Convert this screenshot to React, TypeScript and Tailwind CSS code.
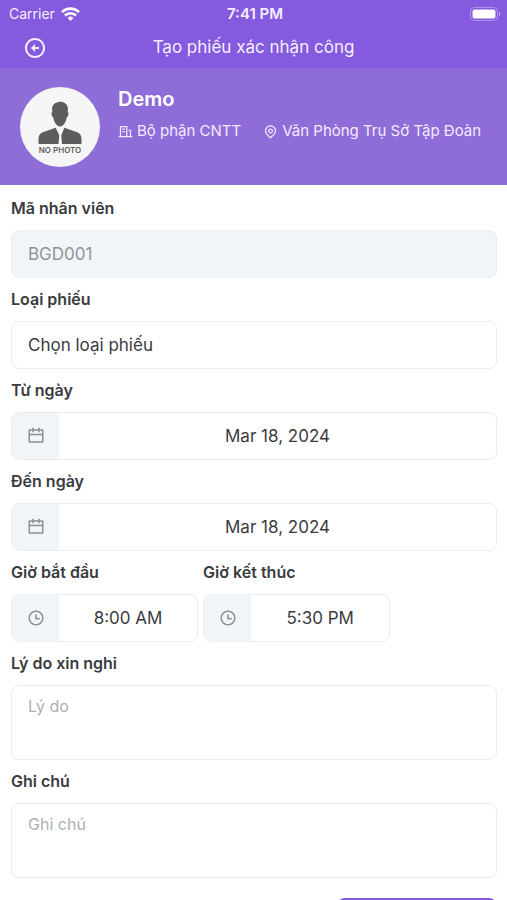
import { ReactNode } from "react";
import {
  RiArrowLeftCircleLine,
  RiBuildingLine,
  RiCalendarLine,
  RiMapPinLine,
  RiTimeLine,
} from "react-icons/ri";

interface FieldProps {
  id: string;
  label: string;
  className?: string;
  children: ReactNode;
}

function Field({ id, label, className = "", children }: FieldProps) {
  return (
    <div className={`flex flex-col gap-2.5 ${className}`}>
      <label htmlFor={id} className="text-base leading-6 font-semibold">
        {label}
      </label>
      {children}
    </div>
  );
}

interface PickerProps {
  id: string;
  icon: ReactNode;
  value: string;
}

function Picker({ id, icon, value }: PickerProps) {
  return (
    <div className="flex h-12 overflow-hidden rounded-lg border border-[#e9eef2] bg-white">
      <span className="flex w-[47px] shrink-0 items-center justify-center bg-[#f2f5f8] text-[#8c9095]">
        {icon}
      </span>
      <input
        id={id}
        defaultValue={value}
        className="w-full min-w-0 pt-0.5 text-center text-[17px] outline-none"
      />
    </div>
  );
}

function StatusBar() {
  return (
    <div className="flex h-7 items-center pr-1.5 pl-[9px]">
      <div className="flex flex-1 items-center gap-1.5 text-sm">
        <span>Carrier</span>
        <svg width="19" height="14" viewBox="0 0 19 14" fill="none" stroke="#fff" strokeWidth="2.7">
          <path d="M1 5.1a12.1 12.1 0 0 1 17 0" />
          <path d="M4 8.5a7.8 7.8 0 0 1 11 0" />
          <path d="M9.5 14 6.6 11a4.2 4.2 0 0 1 5.8 0Z" fill="#fff" stroke="none" />
        </svg>
      </div>
      <span className="text-[15px] font-semibold">7:41 PM</span>
      <div className="flex flex-1 justify-end">
        <svg width="31" height="14" viewBox="0 0 31 14">
          <rect x="0.5" y="0.5" width="27" height="13" rx="4" fill="none" stroke="#fff" strokeOpacity="0.35" />
          <rect x="2.5" y="2.5" width="23" height="9" rx="2.2" fill="#fff" />
          <path d="M29 4.8v4.4c1-.4 1.6-1.2 1.6-2.2S30 5.2 29 4.8Z" fill="#fff" fillOpacity="0.4" />
        </svg>
      </div>
    </div>
  );
}

function Avatar() {
  return (
    <div className="flex size-20 shrink-0 flex-col items-center rounded-full bg-[#f5f5f5] pt-[14px] text-[#5c5c5c]">
      <svg width="44" height="44" viewBox="0 0 44 44" fill="currentColor">
        <path d="M22 .8c3-.4 7.700 1.700 7.900 6.600l-.2 3.500c.9.200.9 1.600.5 3-.3 1.300-.7 2.100-1.400 2.300-.5 3-1.500 5.400-3.100 7.300-2 2.500-5.400 2.500-7.400 0-1.600-1.900-2.600-4.300-3.100-7.300-.7-.2-1.100-1-1.400-2.300-.4-1.400-.4-2.800.5-3l-.2-3.500C14.300 3.500 17 1.700 19.200 1.400c.8-.5 1.800-.8 2.800-.6Z" />
        <path d="M17.700 26.800 21.300 34.500 20.500 43H.5v-4.500c0-4.400 2-6.600 5.700-7.700Z" />
        <path d="M26.300 26.800 23.300 34.500 24 43h19.500v-4.500c0-4.400-2-6.600-5.700-7.700Z" />
      </svg>
      <span className="text-[8px] leading-[10px] font-semibold">NO PHOTO</span>
    </div>
  );
}

export default function App() {
  return (
    <div className="flex h-screen flex-col overflow-hidden bg-white font-[Inter,sans-serif] text-[#3a3b3f]">
      <header className="shrink-0 bg-[#845adf] text-[#f6efff]">
        <StatusBar />
        <div className="flex h-10 items-center px-[23px]">
          <button type="button" aria-label="Back" className="flex w-6 justify-center">
            <RiArrowLeftCircleLine size={24} />
          </button>
          <h1 className="flex-1 pr-6 text-center text-[17px]">Tạo phiếu xác nhận công</h1>
        </div>
      </header>

      <section className="flex shrink-0 gap-[18px] bg-[#8f6dd8] px-5 pt-[19px] pb-[18px] text-[#f4eaff]">
        <Avatar />
        <div className="flex min-w-0 flex-col gap-2">
          <h2 className="text-xl leading-6 font-semibold text-white">Demo</h2>
          <div className="flex gap-[22px] text-[15px] leading-6 whitespace-nowrap">
            <span className="flex items-center gap-1">
              <RiBuildingLine size={15} />
              Bộ phận CNTT
            </span>
            <span className="flex items-center gap-1">
              <RiMapPinLine size={15} />
              Văn Phòng Trụ Sở Tập Đoàn
            </span>
          </div>
        </div>
      </section>

      <form className="flex min-h-0 flex-1 flex-col overflow-y-auto [scrollbar-width:none]">
        <div className="flex shrink-0 flex-col gap-[9px] pt-[11px] pr-[10px] pb-5 pl-[11px]">
          <Field id="code" label="Mã nhân viên">
            <input
              id="code"
              disabled
              defaultValue="BGD001"
              className="h-12 rounded-lg border border-[#e9eef2] bg-[#f2f5f8] px-4 text-[17px] text-[#919396]"
            />
          </Field>
          <Field id="type" label="Loại phiếu">
            <select
              id="type"
              className="h-12 appearance-none rounded-lg border border-[#e9eef2] bg-white px-4 pt-0.5 text-[17px]"
            >
              <option>Chọn loại phiếu</option>
            </select>
          </Field>
          <Field id="from" label="Từ ngày">
            <Picker id="from" icon={<RiCalendarLine size={18} />} value="Mar 18, 2024" />
          </Field>
          <Field id="to" label="Đến ngày">
            <Picker id="to" icon={<RiCalendarLine size={18} />} value="Mar 18, 2024" />
          </Field>
          <div className="flex gap-[5px]">
            <Field id="start" label="Giờ bắt đầu" className="w-[38.5%]">
              <Picker id="start" icon={<RiTimeLine size={18} />} value="8:00 AM" />
            </Field>
            <Field id="end" label="Giờ kết thúc" className="w-[38.5%]">
              <Picker id="end" icon={<RiTimeLine size={18} />} value="5:30 PM" />
            </Field>
          </div>
          <Field id="reason" label="Lý do xin nghỉ">
            <textarea
              id="reason"
              placeholder="Lý do"
              className="h-[75px] resize-none rounded-lg border border-[#e9eef2] px-4 py-2 text-base placeholder:text-[#adafb2]"
            />
          </Field>
          <Field id="note" label="Ghi chú">
            <textarea
              id="note"
              placeholder="Ghi chú"
              className="h-[75px] resize-none rounded-lg border border-[#e9eef2] px-4 py-2 text-base placeholder:text-[#adafb2]"
            />
          </Field>
        </div>
        <div className="flex shrink-0 justify-end px-[10px] pb-5">
          <button type="submit" aria-label="Submit" className="h-12 w-40 rounded-lg bg-[#845adf]" />
        </div>
      </form>
    </div>
  );
}
